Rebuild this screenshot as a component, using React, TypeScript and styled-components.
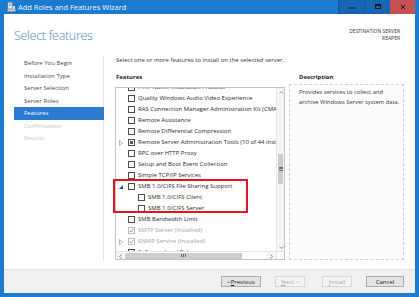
import React from 'react';
import styled, { createGlobalStyle } from 'styled-components';

type BoxState = 'empty' | 'partial' | 'checked';
type Expand = 'none' | 'closed' | 'open';

interface Feature {
    name: string;
    level: number;
    state: BoxState;
    expand: Expand;
    disabled?: boolean;
}

const steps = [
    { label: 'Before You Begin' },
    { label: 'Installation Type' },
    { label: 'Server Selection' },
    { label: 'Server Roles' },
    { label: 'Features', active: true },
    { label: 'Confirmation', disabled: true },
    { label: 'Results', disabled: true },
];

const features: Feature[] = [
    { name: 'Peer Name Resolution Protocol', level: 0, state: 'empty', expand: 'none' },
    { name: 'Quality Windows Audio Video Experience', level: 0, state: 'empty', expand: 'none' },
    { name: 'RAS Connection Manager Administration Kit (CMAK)', level: 0, state: 'empty', expand: 'none' },
    { name: 'Remote Assistance', level: 0, state: 'empty', expand: 'none' },
    { name: 'Remote Differential Compression', level: 0, state: 'empty', expand: 'none' },
    { name: 'Remote Server Administration Tools (10 of 44 installed)', level: 0, state: 'partial', expand: 'closed' },
    { name: 'RPC over HTTP Proxy', level: 0, state: 'empty', expand: 'none' },
    { name: 'Setup and Boot Event Collection', level: 0, state: 'empty', expand: 'none' },
    { name: 'Simple TCP/IP Services', level: 0, state: 'empty', expand: 'none' },
    { name: 'SMB 1.0/CIFS File Sharing Support', level: 0, state: 'empty', expand: 'open' },
    { name: 'SMB 1.0/CIFS Client', level: 1, state: 'empty', expand: 'none' },
    { name: 'SMB 1.0/CIFS Server', level: 1, state: 'empty', expand: 'none' },
    { name: 'SMB Bandwidth Limit', level: 0, state: 'empty', expand: 'none' },
    { name: 'SMTP Server (Installed)', level: 0, state: 'checked', expand: 'none', disabled: true },
    { name: 'SNMP Service (Installed)', level: 0, state: 'checked', expand: 'closed', disabled: true },
    { name: 'Software Load Balancer', level: 0, state: 'empty', expand: 'none' },
];

const App: React.FC = () => {
    return (
        <>
            <GlobalStyle />
            <Window>
                <TitleBar>
                    <TitleIcon width="9" height="10" viewBox="0 0 9 10">
                        <rect x="1" y="0.5" width="4" height="6.5" fill="#e8e8e8" stroke="#9aa4ad" strokeWidth="0.6" />
                        <line x1="2" y1="2" x2="4" y2="2" stroke="#6f7a85" strokeWidth="0.6" />
                        <line x1="2" y1="3.5" x2="4" y2="3.5" stroke="#6f7a85" strokeWidth="0.6" />
                        <rect x="0.5" y="7" width="8" height="2.5" fill="#c9ced3" stroke="#7d8790" strokeWidth="0.5" />
                        <rect x="5.5" y="4" width="2.5" height="3" fill="#d6dadf" />
                    </TitleIcon>
                    <TitleText>Add Roles and Features Wizard</TitleText>
                    <TitleButtons>
                        <TitleButton>
                            <svg width="6" height="6" viewBox="0 0 6 6"><line x1="0" y1="4" x2="6" y2="4" stroke="#1a1a1a" strokeWidth="1" /></svg>
                        </TitleButton>
                        <TitleButton>
                            <svg width="6" height="6" viewBox="0 0 6 6"><rect x="0.5" y="0.5" width="5" height="4" fill="none" stroke="#1a1a1a" strokeWidth="1" /><line x1="0" y1="1.5" x2="6" y2="1.5" stroke="#1a1a1a" strokeWidth="1" /></svg>
                        </TitleButton>
                        <TitleButton $close>
                            <svg width="6" height="6" viewBox="0 0 6 6"><path d="M1 1 L5 5 M5 1 L1 5" stroke="#1a1a1a" strokeWidth="1" /></svg>
                        </TitleButton>
                    </TitleButtons>
                </TitleBar>
                <Frame>
                    <Body>
                        <Header>
                            <Heading>Select features</Heading>
                            <Destination>
                                <div>DESTINATION SERVER</div>
                                <div>REAPER</div>
                            </Destination>
                        </Header>
                        <Main>
                            <Nav>
                                {steps.map((s) => (
                                    <NavItem key={s.label} $active={!!s.active} $disabled={!!s.disabled}>
                                        {s.label}
                                    </NavItem>
                                ))}
                            </Nav>
                            <Content>
                                <Intro>Select one or more features to install on the selected server.</Intro>
                                <Columns>
                                    <FeatureColumn>
                                        <Label>Features</Label>
                                        <ListBox>
                                            <Viewport>
                                                <Rows>
                                                    {features.map((f) => (
                                                        <Row key={f.name} $level={f.level} $disabled={!!f.disabled}>
                                                            <Expander>
                                                                {f.expand === 'closed' && (
                                                                    <svg width="4" height="6" viewBox="0 0 4 6"><path d="M0.5 0.5 L3.5 3 L0.5 5.5 Z" fill="none" stroke="#9a9a9a" strokeWidth="0.7" /></svg>
                                                                )}
                                                                {f.expand === 'open' && (
                                                                    <svg width="4" height="4" viewBox="0 0 4 4"><path d="M4 0 L4 4 L0 4 Z" fill="#444" /></svg>
                                                                )}
                                                            </Expander>
                                                            <Check $state={f.state} $disabled={!!f.disabled}>
                                                                {f.state === 'checked' && (
                                                                    <svg width="5" height="5" viewBox="0 0 5 5"><path d="M0.6 2.6 L2 4 L4.4 0.8" fill="none" stroke="#8a8a8a" strokeWidth="0.8" /></svg>
                                                                )}
                                                            </Check>
                                                            <RowText>{f.name}</RowText>
                                                        </Row>
                                                    ))}
                                                </Rows>
                                            </Viewport>
                                            <VScroll>
                                                <Arrow>
                                                    <svg width="5" height="3" viewBox="0 0 5 3"><path d="M0.5 2.5 L2.5 0.5 L4.5 2.5" fill="none" stroke="#606060" strokeWidth="0.7" /></svg>
                                                </Arrow>
                                                <VTrack>
                                                    <VThumb style={{ top: 58, height: 30 }}>
                                                        <Grip $vertical />
                                                    </VThumb>
                                                </VTrack>
                                                <Arrow>
                                                    <svg width="5" height="3" viewBox="0 0 5 3"><path d="M0.5 0.5 L2.5 2.5 L4.5 0.5" fill="none" stroke="#606060" strokeWidth="0.7" /></svg>
                                                </Arrow>
                                            </VScroll>
                                            <HScroll>
                                                <Arrow>
                                                    <svg width="3" height="5" viewBox="0 0 3 5"><path d="M2.5 0.5 L0.5 2.5 L2.5 4.5" fill="none" stroke="#606060" strokeWidth="0.7" /></svg>
                                                </Arrow>
                                                <HTrack>
                                                    <HThumb style={{ width: 117 }}>
                                                        <Grip />
                                                    </HThumb>
                                                </HTrack>
                                                <Arrow>
                                                    <svg width="3" height="5" viewBox="0 0 3 5"><path d="M0.5 0.5 L2.5 2.5 L0.5 4.5" fill="none" stroke="#606060" strokeWidth="0.7" /></svg>
                                                </Arrow>
                                            </HScroll>
                                            <Corner />
                                            <Highlight />
                                        </ListBox>
                                    </FeatureColumn>
                                    <DescColumn>
                                        <DescLabel>Description</DescLabel>
                                        <DescBox>
                                            <DescLine>Provides services to collect and</DescLine>
                                            <DescLine>archive Windows Server system data.</DescLine>
                                        </DescBox>
                                    </DescColumn>
                                </Columns>
                            </Content>
                        </Main>
                        <Footer>
                            <Button $width={40}>&lt; <u>P</u>revious</Button>
                            <Button $width={30} $disabled $gap={14}><u>N</u>ext &gt;</Button>
                            <Button $width={30} $disabled $gap={17}><u>I</u>nstall</Button>
                            <Button $width={38} $gap={14}>Cancel</Button>
                        </Footer>
                    </Body>
                </Frame>
            </Window>
        </>
    );
};

export default App;

const GlobalStyle = createGlobalStyle`
    html, body {
        margin:0;
        padding:0;
        width:419px;
        height:297px;
        overflow:hidden;
    }
    body {
        font-family:"Open Sans", "Noto Sans", sans-serif;
        font-size:6px;
        color:#1e1e1e;
    }
`

const Window = styled.div`
    width:419px;
    height:297px;
    display:flex;
    flex-direction:column;
    background:#1a7bd0;
`

const TitleBar = styled.div`
    height:14px;
    flex-shrink:0;
    display:flex;
    align-items:center;
    padding:0 4px 0 7px;
    color:white;
`

const TitleIcon = styled.svg`
    margin-right:2px;
    margin-top:-1px;
`

const TitleText = styled.div`
    flex:1;
    font-size:7.5px;
    line-height:14px;
    color:#f4f8fc;
`

const TitleButtons = styled.div`
    display:flex;
    height:14px;
`

const TitleButton = styled.div<{ $close?: boolean }>`
    width:${({ $close }) => ($close ? '24px' : '25px')};
    display:flex;
    align-items:center;
    justify-content:center;
    background:${({ $close }) => ($close ? '#c75050' : '#1766b4')};
    border-left:1px solid ${({ $close }) => ($close ? '#c75050' : '#13569a')};
`

const Frame = styled.div`
    flex:1;
    min-height:0;
    display:flex;
    padding:0 4px 4px 4px;
    background:#1a7bd0;
`

const Body = styled.div`
    flex:1;
    min-height:0;
    display:flex;
    flex-direction:column;
    background:white;
`

const Header = styled.div`
    height:42px;
    flex-shrink:0;
    display:flex;
    justify-content:space-between;
    align-items:flex-start;
    padding:0 15px 0 10px;
    box-sizing:border-box;
`

const Heading = styled.div`
    margin-top:13px;
    font-size:12.5px;
    line-height:18px;
    font-weight:300;
    letter-spacing:-0.3px;
    color:#4a8dba;
`

const Destination = styled.div`
    margin-top:14px;
    font-size:5px;
    line-height:7px;
    text-align:right;
    color:#333;
`

const Main = styled.div`
    flex:1;
    display:flex;
    min-height:0;
`

const Nav = styled.div`
    width:100px;
    padding:1px 0 0 10px;
    box-sizing:border-box;
    border-right:1px solid #e4e4e4;
    margin-bottom:8px;
    margin-right:1px;
`

const NavItem = styled.div<{ $active: boolean; $disabled: boolean }>`
    width:90px;
    height:12.5px;
    line-height:12.5px;
    padding-left:10px;
    box-sizing:border-box;
    font-size:6px;
    background:${({ $active }) => ($active ? '#2b7bd0' : 'transparent')};
    color:${({ $active, $disabled }) => ($active ? '#ffffff' : $disabled ? '#c6c6c6' : '#4a4a4a')};
`

const Content = styled.div`
    flex:1;
    display:flex;
    flex-direction:column;
    padding:0 11px 9px 10px;
    min-width:0;
    min-height:0;
`

const Intro = styled.div`
    height:8px;
    line-height:8px;
    font-size:6px;
    color:#333;
    white-space:nowrap;
    padding-left:1px;
`

const Columns = styled.div`
    flex:1;
    display:flex;
    gap:4px;
    margin-top:9px;
    min-height:0;
`

const FeatureColumn = styled.div`
    width:170px;
    display:flex;
    flex-direction:column;
    min-height:0;
`

const DescColumn = styled.div`
    flex:1;
    display:flex;
    flex-direction:column;
    min-height:0;
`

const Label = styled.div`
    height:8px;
    line-height:8px;
    font-size:6px;
    font-weight:700;
    padding-left:1px;
    margin-bottom:6px;
    color:#222;
`

const DescLabel = styled(Label)`
    padding-left:10px;
    margin-bottom:3px;
`

const ListBox = styled.div`
    position:relative;
    flex:1;
    min-height:0;
    display:grid;
    grid-template-columns:minmax(0, 1fr) 8px;
    grid-template-rows:minmax(0, 1fr) 8px;
    border:1px solid #c4c4c4;
`

const Viewport = styled.div`
    overflow:hidden;
    position:relative;
    min-height:0;
`

const Rows = styled.div`
    transform:translateY(-6px);
`

const Row = styled.div<{ $level: number; $disabled: boolean }>`
    height:11px;
    display:flex;
    align-items:center;
    white-space:nowrap;
    padding-left:${({ $level }) => 1 + $level * 10}px;
    color:${({ $disabled }) => ($disabled ? '#a2a2a2' : '#2a2a2a')};
`

const Expander = styled.div`
    width:8px;
    height:11px;
    display:flex;
    align-items:center;
    justify-content:center;
    flex-shrink:0;
`

const Check = styled.div<{ $state: BoxState; $disabled: boolean }>`
    width:7px;
    height:7px;
    margin-left:3px;
    margin-right:3px;
    box-sizing:border-box;
    flex-shrink:0;
    border:1px solid ${({ $disabled }) => ($disabled ? '#bdbdbd' : '#4d4d4d')};
    background:white;
    display:flex;
    align-items:center;
    justify-content:center;
    &::after {
        content:'';
        display:${({ $state }) => ($state === 'partial' ? 'block' : 'none')};
        width:3px;
        height:3px;
        background:#5a5a5a;
    }
`

const RowText = styled.span`
    font-size:6px;
    line-height:11px;
`

const VScroll = styled.div`
    display:flex;
    flex-direction:column;
    background:#f4f4f4;
    border-left:1px solid #e6e6e6;
    min-height:0;
`

const HScroll = styled.div`
    display:flex;
    background:#f4f4f4;
    border-top:1px solid #e6e6e6;
`

const Arrow = styled.div`
    width:9px;
    height:8px;
    flex-shrink:0;
    display:flex;
    align-items:center;
    justify-content:center;
`

const VTrack = styled.div`
    flex:1;
    position:relative;
`

const VThumb = styled.div`
    position:absolute;
    left:1px;
    right:1px;
    background:#cdcdcd;
    display:flex;
    align-items:center;
    justify-content:center;
`

const HTrack = styled.div`
    flex:1;
    display:flex;
    align-items:center;
    background:white;
`

const HThumb = styled.div`
    height:6px;
    background:#cdcdcd;
    display:flex;
    align-items:center;
    justify-content:center;
`

const Grip = styled.div<{ $vertical?: boolean }>`
    width:${({ $vertical }) => ($vertical ? '4px' : '5px')};
    height:${({ $vertical }) => ($vertical ? '4px' : '3px')};
    background:${({ $vertical }) =>
        $vertical
            ? 'repeating-linear-gradient(to bottom, #6a6a6a 0 1px, transparent 1px 1.5px)'
            : 'repeating-linear-gradient(to right, #6a6a6a 0 1px, transparent 1px 2px)'};
`

const Corner = styled.div`
    background:#ffffff;
    border-top:1px solid #e6e6e6;
    border-left:1px solid #e6e6e6;
`

const Highlight = styled.div`
    position:absolute;
    left:-3px;
    top:91px;
    width:135px;
    height:34px;
    box-sizing:border-box;
    border:2px solid #e5141d;
    pointer-events:none;
`

const DescBox = styled.div`
    flex:1;
    border:1px dashed #cfcfcf;
    background:#fcfcfc;
    padding:2px 0 2px 9px;
    font-size:5.8px;
    line-height:10px;
    color:#333;
`

const DescLine = styled.div`
    white-space:nowrap;
`

const Footer = styled.div`
    height:23px;
    flex-shrink:0;
    display:flex;
    align-items:center;
    justify-content:flex-end;
    padding-right:11px;
    background:#f0f0f0;
    border-top:1px solid #e2e2e2;
`

const Button = styled.div<{ $width: number; $disabled?: boolean; $gap?: number }>`
    width:${({ $width }) => $width}px;
    height:11px;
    margin-left:${({ $gap }) => $gap ?? 0}px;
    box-sizing:border-box;
    display:flex;
    align-items:center;
    justify-content:center;
    font-size:6px;
    background:${({ $disabled }) => ($disabled ? '#f4f4f4' : '#e3e3e3')};
    border:1px solid ${({ $disabled }) => ($disabled ? '#d6d6d6' : '#adadad')};
    color:${({ $disabled }) => ($disabled ? '#a8a8a8' : '#222')};
`
